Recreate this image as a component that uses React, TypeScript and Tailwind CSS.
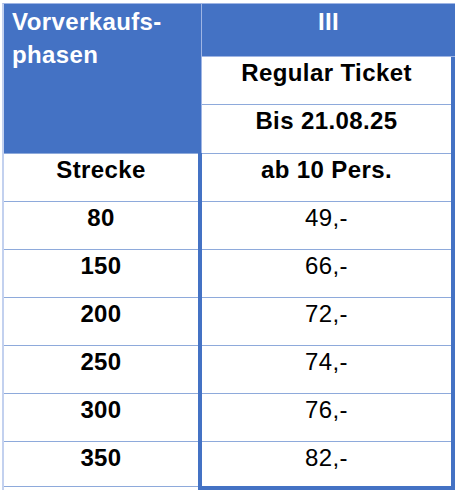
const rows = [
  ['80', '49,-'],
  ['150', '66,-'],
  ['200', '72,-'],
  ['250', '74,-'],
  ['300', '76,-'],
  ['350', '82,-'],
];

export default function App() {
  return (
    <div
      className="h-[496px] w-[458px] bg-white pt-[3px] pl-[2px] text-[24px] leading-[26px] tracking-[0.4px] text-black"
      style={{ fontFamily: '"Liberation Sans", Arial, sans-serif' }}
    >
      <div className="flex w-[453px] flex-col">
        {/* header block */}
        <div className="flex h-[150px]">
          <div className="h-full w-[200px] border-t border-l-2 border-t-[#9fb5e4] border-l-[#c3d1ef] border-r border-r-[#9fb5e4] bg-[#4472c4] pt-[1px] pl-[8px] leading-[33px] font-bold text-white">
            Vorverkaufs-
            <br />
            phasen
          </div>
          <div className="flex w-[253px] flex-col">
            <div className="h-[54px] border-t border-b border-t-[#9fb5e4] border-b-[#9fb5e4] bg-[#4472c4] pt-[5px] text-center font-bold text-white">
              III
            </div>
            <div className="flex flex-1 flex-col border-r-4 border-[#4472c4]">
              <div className="h-[48px] border-b border-[#8eaadb] pt-[3px] text-center font-bold">
                Regular Ticket
              </div>
              <div className="h-[48px] pt-[3px] text-center font-bold">
                Bis 21.08.25
              </div>
            </div>
          </div>
        </div>

        {/* body */}
        <div className="flex">
          <div className="flex w-[196px] flex-col border-l-2 border-[#c3d1ef]">
            <div className="h-[48px] border-t border-[#8eaadb] pt-[3px] text-center font-bold">
              Strecke
            </div>
            {rows.map(([km]) => (
              <div
                key={km}
                className="h-[48px] border-t border-[#8eaadb] pt-[3px] text-center font-bold last:h-[46px] last:border-b"
              >
                {km}
              </div>
            ))}
          </div>
          <div className="flex w-[257px] flex-col border-r-4 border-b-4 border-l-4 border-[#4472c4]">
            <div className="h-[48px] border-t border-[#8eaadb] pt-[3px] text-center font-bold">
              ab 10 Pers.
            </div>
            {rows.map(([km, price]) => (
              <div
                key={km}
                className="h-[48px] border-t border-[#8eaadb] pt-[3px] text-center last:h-[45px]"
              >
                {price}
              </div>
            ))}
          </div>
        </div>
      </div>
    </div>
  );
}
